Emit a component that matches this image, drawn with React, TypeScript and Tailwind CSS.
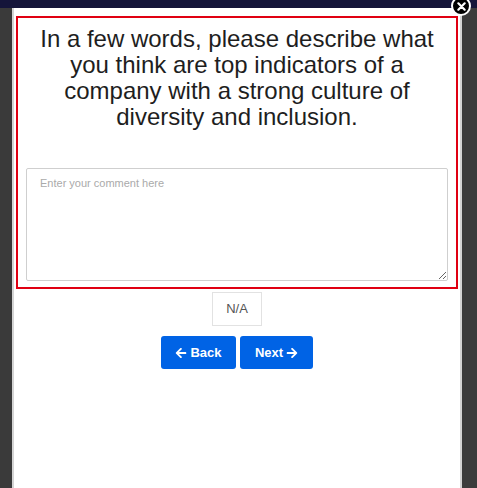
import { FaArrowLeft, FaArrowRight } from "react-icons/fa";

export default function App() {
    return (
        <div className="relative flex flex-col w-[477px] h-[488px] overflow-hidden bg-[#353535] font-['Liberation_Sans',Arial,sans-serif]">
            <div className="h-[8px] bg-[#15153a] shrink-0" />
            <div className="flex flex-1">
                <div className="w-[12px] bg-[#3a3a3a]" />
                <div className="w-[450px] bg-white border-x-2 border-[#d4d4d4] pt-[8px] px-[2px]">
                    <div className="border-2 border-[#e00012] px-[8px] pt-[8px] pb-[6px] flex flex-col">
                        <h1 className="text-[24px] leading-[26px] text-center text-[#1e1e1e]">
                            In a few words, please describe what you think are top indicators of a company with a strong culture of diversity and inclusion.
                        </h1>
                        <textarea
                            placeholder="Enter your comment here"
                            className="mt-[38px] h-[113px] w-full border border-[#cfcfcf] rounded-[2px] px-[13px] py-[6px] text-[11px] text-[#333] placeholder:text-[#aaa] outline-none"
                        />
                    </div>
                    <div className="flex justify-center mt-[3px]">
                        <div className="w-[50px] h-[34px] flex items-center justify-center border border-[#e2e2e2] text-[13px] text-[#555]">N/A</div>
                    </div>
                    <div className="flex justify-center gap-[4px] mt-[10px]">
                        <button className="flex items-center gap-[3px] w-[75px] h-[33px] justify-center rounded-[3px] bg-[#0063e5] text-white text-[13px] font-bold">
                            <FaArrowLeft className="w-[12px] h-[12px]" />Back
                        </button>
                        <button className="flex items-center gap-[3px] w-[73px] h-[33px] justify-center rounded-[3px] bg-[#0063e5] text-white text-[13px] font-bold">
                            Next<FaArrowRight className="w-[12px] h-[12px]" />
                        </button>
                    </div>
                </div>
                <div className="flex-1 bg-[#3c3c3c]" />
            </div>
            <div className="absolute left-[451px] top-[-4px] w-[20px] h-[20px] rounded-full bg-black border-2 border-white flex items-center justify-center">
                <svg viewBox="0 0 10 10" className="w-[9px] h-[9px]">
                    <path d="M1.5 1.5 L8.5 8.5 M8.5 1.5 L1.5 8.5" stroke="white" strokeWidth="2.4" strokeLinecap="round" />
                </svg>
            </div>
        </div>
    );
}
